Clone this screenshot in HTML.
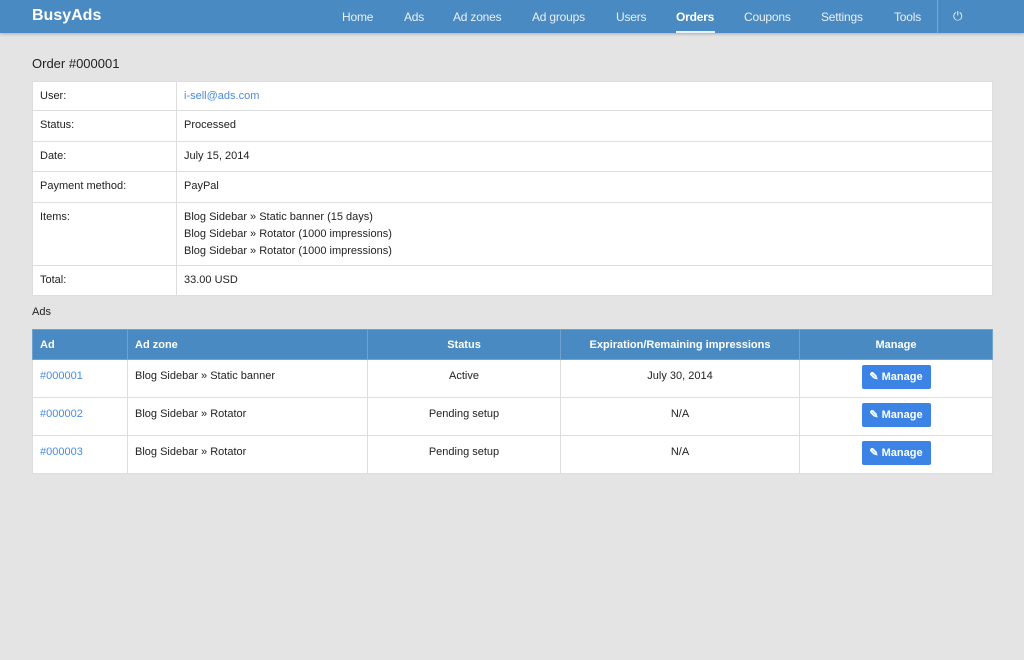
<!DOCTYPE html>
<html><head><style>
*{box-sizing:border-box;margin:0;padding:0}
body{width:1024px;height:660px;background:#e4e4e4;font-family:"Liberation Sans",sans-serif;font-size:11px;color:#222;position:relative;overflow:hidden}
.nav{position:absolute;left:0;top:0;width:1024px;height:33px;background:#4a8ac2;box-shadow:0 1px 3px rgba(0,0,0,.25)}
.brand{position:absolute;left:32px;top:7px;color:#fff;font-size:16px;font-weight:bold}
.nav a{position:absolute;top:10px;color:#e8f0f8;font-size:12px;text-decoration:none;letter-spacing:-.2px}
.nav a.act{color:#fff;font-weight:bold}
.uline{position:absolute;left:676px;top:31px;width:39px;height:2px;background:#e8f0f8}
.sep{position:absolute;left:937px;top:0;width:1px;height:33px;background:#7aa8d4}
h1{position:absolute;left:32px;top:56px;font-size:13px;font-weight:normal;color:#222}
table{border-collapse:collapse;background:#fff;position:absolute;left:32px;width:961px}
td,th{border:1px solid #ddd;padding:0 7px;vertical-align:middle}
.info td{vertical-align:top;padding-top:8px}
a.l{color:#4a8ae0;text-decoration:none}
.ads th{background:#4a8ac2;color:#fff;font-weight:bold;border-color:#6fa2d0;height:30px;text-align:center}
.ads td{height:38px}
.btn{display:inline-block;background:#3b84e6;color:#fff;border-radius:2px;width:69px;height:24px;line-height:24px;text-align:center;font-weight:bold;margin-top:5px}
.c{text-align:center}
</style></head><body>
<div class="nav">
<div class="brand">BusyAds</div>
<a style="left:342px">Home</a><a style="left:404px">Ads</a><a style="left:453px">Ad zones</a><a style="left:532px">Ad groups</a><a style="left:616px">Users</a><a class="act" style="left:676px">Orders</a><a style="left:744px">Coupons</a><a style="left:821px">Settings</a><a style="left:894px">Tools</a>
<div class="uline"></div><div class="sep"></div>
<a style="left:953px;top:9px">&#x23FB;</a>
</div>
<h1>Order #000001</h1>
<table class="info" style="top:81px">
<tr style="height:29px"><td style="width:144px">User:</td><td><a class="l">i-sell@ads.com</a></td></tr>
<tr style="height:31px"><td>Status:</td><td>Processed</td></tr>
<tr style="height:30px"><td>Date:</td><td>July 15, 2014</td></tr>
<tr style="height:31px"><td>Payment method:</td><td>PayPal</td></tr>
<tr style="height:63px"><td>Items:</td><td style="line-height:17px;padding-top:6px">Blog Sidebar » Static banner (15 days)<br>Blog Sidebar » Rotator (1000 impressions)<br>Blog Sidebar » Rotator (1000 impressions)</td></tr>
<tr style="height:30px"><td>Total:</td><td>33.00 USD</td></tr>
</table>
<div style="position:absolute;left:32px;top:306px">Ads</div>
<table class="ads" style="top:329px">
<tr><th style="width:95px;text-align:left">Ad</th><th style="width:240px;text-align:left">Ad zone</th><th style="width:193px">Status</th><th style="width:239px">Expiration/Remaining impressions</th><th>Manage</th></tr>
<tr><td style="vertical-align:top;padding-top:10px"><a class="l">#000001</a></td><td style="vertical-align:top;padding-top:10px">Blog Sidebar » Static banner</td><td class="c" style="vertical-align:top;padding-top:10px">Active</td><td class="c" style="vertical-align:top;padding-top:10px">July 30, 2014</td><td class="c" style="vertical-align:top"><span class="btn">&#x270E; Manage</span></td></tr>
<tr><td style="vertical-align:top;padding-top:10px"><a class="l">#000002</a></td><td style="vertical-align:top;padding-top:10px">Blog Sidebar » Rotator</td><td class="c" style="vertical-align:top;padding-top:10px">Pending setup</td><td class="c" style="vertical-align:top;padding-top:10px">N/A</td><td class="c" style="vertical-align:top"><span class="btn">&#x270E; Manage</span></td></tr>
<tr><td style="vertical-align:top;padding-top:10px"><a class="l">#000003</a></td><td style="vertical-align:top;padding-top:10px">Blog Sidebar » Rotator</td><td class="c" style="vertical-align:top;padding-top:10px">Pending setup</td><td class="c" style="vertical-align:top;padding-top:10px">N/A</td><td class="c" style="vertical-align:top"><span class="btn">&#x270E; Manage</span></td></tr>
</table>
</body></html>
